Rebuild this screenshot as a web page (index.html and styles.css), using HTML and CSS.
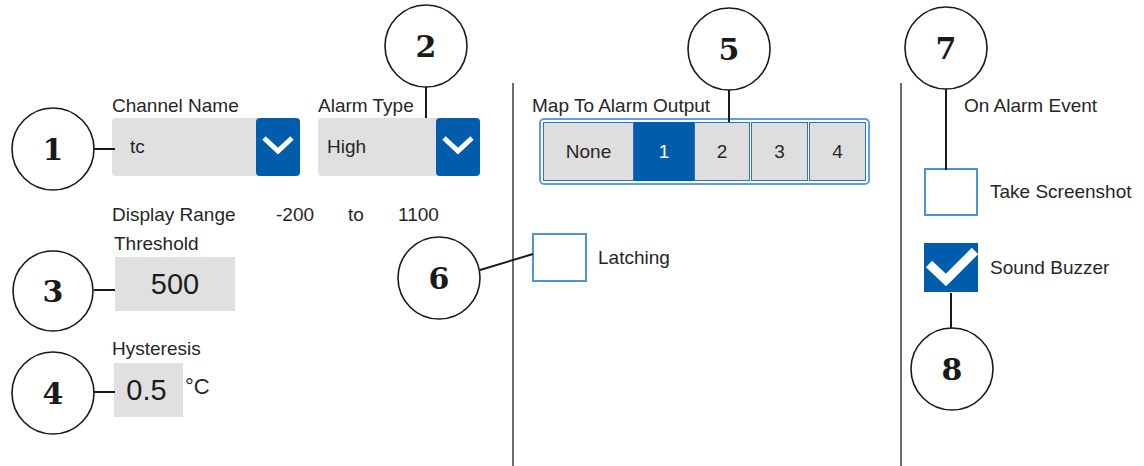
FILE: index.html
```html
<!DOCTYPE html>
<html lang="en">
<head>
  <meta charset="UTF-8">
  <title>Alarm Setup</title>
  <link rel="stylesheet" href="styles.css">
</head>
<body>
  <div class="page">

    <div class="col col-main">
      <div class="select-row">
        <div class="field field-channel">
          <div class="label">Channel Name</div>
          <div class="select">
            <div class="select-value indent">tc</div>
            <div class="select-btn">
              <svg width="44" height="58" viewBox="0 0 44 58"><polyline points="8,20 22,33 36,20" fill="none" stroke="#fff" stroke-width="5"/></svg>
            </div>
          </div>
        </div>
        <div class="field field-type">
          <div class="label">Alarm Type</div>
          <div class="select">
            <div class="select-value">High</div>
            <div class="select-btn">
              <svg width="44" height="58" viewBox="0 0 44 58"><polyline points="8,20 22,33 36,20" fill="none" stroke="#fff" stroke-width="5"/></svg>
            </div>
          </div>
        </div>
      </div>

      <div class="range-row">
        <span>Display Range</span>
        <span>-200</span>
        <span>to</span>
        <span>1100</span>
      </div>

      <div class="label threshold-label">Threshold</div>
      <div class="value-box threshold-box">500</div>

      <div class="label hysteresis-label">Hysteresis</div>
      <div class="hysteresis-row">
        <div class="value-box hysteresis-box">0.5</div>
        <span class="unit">°C</span>
      </div>
    </div>

    <div class="col col-output">
      <div class="label">Map To Alarm Output</div>
      <div class="segmented">
        <div class="seg seg-none">None</div>
        <div class="seg seg-1 active">1</div>
        <div class="seg seg-2">2</div>
        <div class="seg seg-3">3</div>
        <div class="seg seg-4">4</div>
      </div>
      <div class="check-row latching">
        <div class="checkbox"></div>
        <span>Latching</span>
      </div>
    </div>

    <div class="col col-event">
      <div class="label event-label">On Alarm Event</div>
      <div class="check-row screenshot">
        <div class="checkbox"></div>
        <span>Take Screenshot</span>
      </div>
      <div class="check-row buzzer">
        <div class="checkbox checked">
          <svg width="54" height="49" viewBox="0 0 54 49"><polyline points="5,21 22,37 51,8" fill="none" stroke="#fff" stroke-width="9"/></svg>
        </div>
        <span>Sound Buzzer</span>
      </div>
    </div>

    <!-- numbered callouts -->
    <svg class="callouts" width="1144" height="466" viewBox="0 0 1144 466">
      <g class="leaders">
        <line x1="94" y1="149" x2="115" y2="149"/>
        <line x1="426" y1="87" x2="426" y2="118"/>
        <line x1="94" y1="290" x2="115" y2="290"/>
        <line x1="94" y1="392" x2="115" y2="392"/>
        <line x1="729" y1="90" x2="729" y2="122"/>
        <line x1="480" y1="270" x2="533" y2="254"/>
        <line x1="946" y1="89" x2="946" y2="170"/>
        <line x1="951" y1="293" x2="951" y2="328"/>
      </g>
      <g class="bubbles">
        <circle cx="53" cy="149" r="41"/>
        <circle cx="426" cy="46" r="41"/>
        <circle cx="53" cy="291" r="40"/>
        <circle cx="53" cy="393" r="41"/>
        <circle cx="729" cy="49" r="41"/>
        <circle cx="439" cy="278" r="41"/>
        <circle cx="946" cy="48" r="41"/>
        <circle cx="952" cy="369" r="41"/>
      </g>
      <g class="numbers">
        <text x="53" y="160">1</text>
        <text x="426" y="57">2</text>
        <text x="53" y="302">3</text>
        <text x="53" y="404">4</text>
        <text x="729" y="60">5</text>
        <text x="439" y="289">6</text>
        <text x="946" y="59">7</text>
        <text x="952" y="380">8</text>
      </g>
    </svg>

  </div>
</body>
</html>
```

FILE: styles.css
```css
body {
  margin: 0;
  background: #ffffff;
  font-family: 'Liberation Sans', Arial, sans-serif;
  font-size: 19px;
  color: #262626;
}

.page {
  position: relative;
  display: flex;
  width: 1144px;
  height: 466px;
  overflow: hidden;
}

.col {
  box-sizing: border-box;
}

.label {
  line-height: 22px;
  margin-bottom: 1px;
}

/* left column */
.col-main {
  width: 512px;
  padding: 95px 0 0 112px;
}

.select-row {
  display: flex;
  gap: 18px;
}

.field-channel {
  width: 188px;
}

.field-type {
  width: 162px;
}

.select {
  display: flex;
  height: 58px;
  background-color: #e0e0e0;
  border-radius: 4px;
}

.select-value {
  flex: 1;
  display: flex;
  align-items: center;
  padding-left: 9px;
  font-size: 19px;
}

.select-value.indent {
  padding-left: 18px;
}

.select-btn {
  width: 44px;
  background-color: #005dab;
  border-radius: 4px;
}

.select-btn svg {
  display: block;
}

.range-row {
  display: grid;
  grid-template-columns: 164px 72px 50px auto;
  margin-top: 28px;
  line-height: 22px;
}

.threshold-label {
  margin-top: 7px;
  margin-left: 2px;
}

.value-box {
  display: flex;
  justify-content: center;
  align-items: center;
  height: 54px;
  background-color: #e0e0e0;
  font-size: 29px;
  color: #1c1c1c;
}

.threshold-box {
  width: 120px;
  margin-top: 2px;
  margin-left: 3px;
}

.hysteresis-label {
  margin-top: 27px;
}

.hysteresis-row {
  display: flex;
  align-items: flex-start;
  margin-top: 3px;
  margin-left: 2px;
}

.hysteresis-box {
  width: 69px;
  padding-right: 4px;
  box-sizing: border-box;
}

.unit {
  margin-left: 2px;
  margin-top: 12px;
  font-size: 22px;
  line-height: 24px;
}

/* middle column */
.col-output {
  width: 388px;
  margin-top: 83px;
  padding: 12px 0 0 18px;
  border-left: 2px solid #6e6e6e;
}

.segmented {
  display: flex;
  width: 331px;
  height: 67px;
  margin-left: 7px;
  padding: 2px;
  box-sizing: border-box;
  border: 2px solid #5c9ee2;
  border-radius: 5px;
}

.seg {
  display: flex;
  justify-content: center;
  align-items: center;
  box-sizing: border-box;
  height: 59px;
  background-color: #dedede;
  border: 1px solid #2e72c2;
}

.seg.active {
  background-color: #005dab;
  border-color: #005dab;
  color: #ffffff;
}

.seg-none { width: 91px; }
.seg-1 { width: 60px; }
.seg-2 { width: 56px; }
.seg-3 { width: 57px; margin-left: 1px; }
.seg-4 { width: 57px; margin-left: 1px; }

.check-row {
  display: flex;
  align-items: center;
}

.checkbox {
  box-sizing: border-box;
  width: 55px;
  height: 49px;
  border: 2px solid #4c94d9;
  background: #ffffff;
}

.checkbox.checked {
  border-color: #005dab;
  background-color: #005dab;
}

.checkbox svg {
  display: block;
  margin: -2px;
}

.latching {
  margin-top: 48px;
}

.latching span {
  margin-left: 11px;
}

/* right column */
.col-event {
  flex: 1;
  margin-top: 83px;
  padding: 12px 0 0 22px;
  border-left: 2px solid #6e6e6e;
}

.event-label {
  margin-left: 40px;
}

.col-event .checkbox {
  width: 54px;
}

.col-event .check-row span {
  margin-left: 12px;
}

.screenshot {
  margin-top: 51px;
}

.screenshot .checkbox {
  height: 48px;
}

.buzzer {
  margin-top: 27px;
}

/* callout layer */
.callouts {
  position: absolute;
  left: 0;
  top: 0;
  pointer-events: none;
}

.leaders line {
  stroke: #1a1a1a;
  stroke-width: 2;
}

.bubbles circle {
  fill: #ffffff;
  stroke: #1a1a1a;
  stroke-width: 1.6;
}

.numbers text {
  font-family: 'DejaVu Serif', serif;
  font-weight: bold;
  font-size: 30px;
  text-anchor: middle;
  fill: #1a1a1a;
}
```
